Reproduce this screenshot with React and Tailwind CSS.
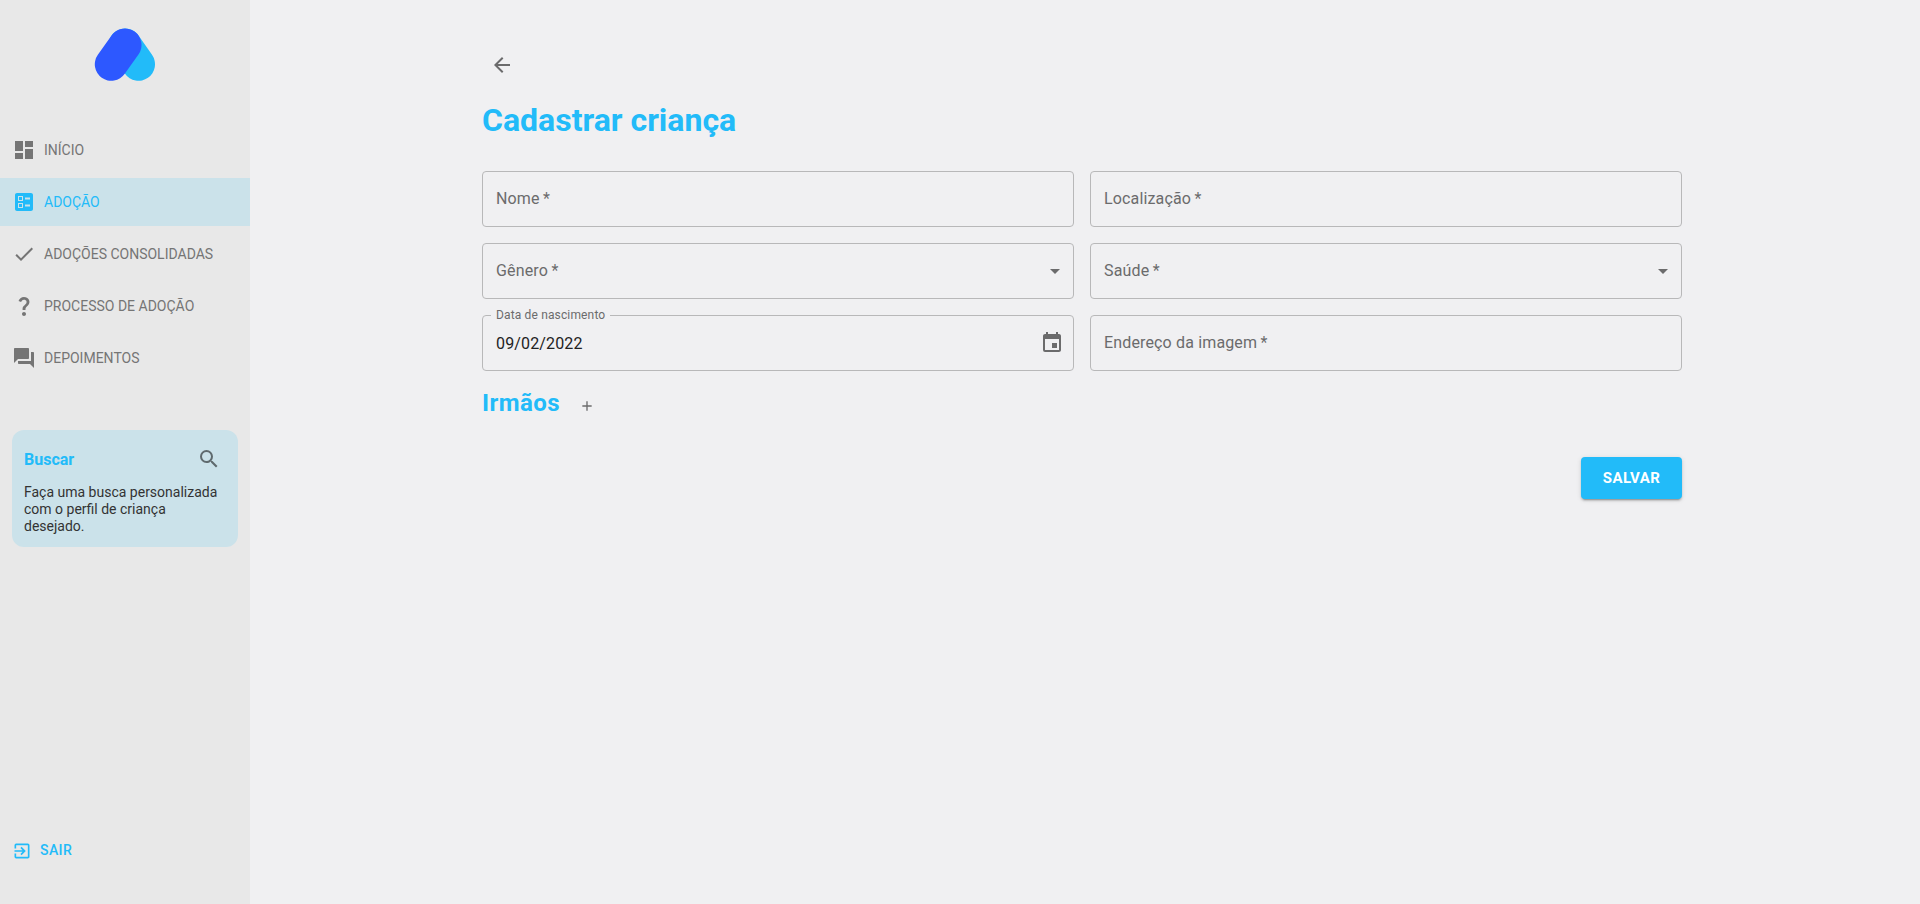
import React from "react";
import {
  MdDashboard,
  MdBallot,
  MdCheck,
  MdQuestionMark,
  MdQuestionAnswer,
  MdSearch,
  MdArrowBack,
  MdArrowDropDown,
  MdEvent,
  MdAdd,
  MdExitToApp,
} from "react-icons/md";

const menu = [
  { label: "INÍCIO", icon: MdDashboard },
  { label: "ADOÇÃO", icon: MdBallot, active: true },
  { label: "ADOÇÕES CONSOLIDADAS", icon: MdCheck },
  { label: "PROCESSO DE ADOÇÃO", icon: MdQuestionMark },
  { label: "DEPOIMENTOS", icon: MdQuestionAnswer },
];

function Logo() {
  return (
    <svg width="62" height="56" viewBox="94 27 62 56" fill="none" strokeWidth="33" strokeLinecap="round">
      <path d="M125 45 138.5 64.3" stroke="#22bbf9" />
      <path d="M125 45 111.3 64.3" stroke="#2d58ff" />
    </svg>
  );
}

function Sidebar() {
  return (
    <aside className="flex w-[250px] shrink-0 flex-col bg-[#e8e8e8]">
      <div className="flex h-[126px] justify-center pt-[27px]">
        <Logo />
      </div>
      <nav className="flex flex-col gap-1">
        {menu.map(({ label, icon: Icon, active }) => (
          <a
            key={label}
            className={`flex h-12 items-center gap-2 pl-3 text-sm ${
              active ? "bg-[#cbe2ea] text-[#22bbf9]" : "text-[#757575]"
            }`}
          >
            <Icon size={24} />
            {label}
          </a>
        ))}
      </nav>
      <section className="mx-3 mt-12 h-[117px] rounded-xl bg-[#cbe2ea] px-3">
        <div className="flex h-[54px] items-center justify-between pt-1 pr-[5px]">
          <h2 className="pt-0.5 text-base font-bold text-[#22bbf9]">Buscar</h2>
          <MdSearch size={24} className="text-[#5f6a6e]" />
        </div>
        <p className="text-sm leading-[17px] text-[#333]">
          Faça uma busca personalizada com o perfil de criança desejado.
        </p>
      </section>
      <button className="mt-auto mb-[41px] ml-3 flex h-6 items-center gap-2 text-sm font-medium tracking-[0.4px] text-[#22bbf9]">
        <MdExitToApp size={20} />
        <span className="pb-0.5">SAIR</span>
      </button>
    </aside>
  );
}

function Field({ label, children }) {
  return (
    <div className="flex h-14 items-center justify-between rounded border border-[#b8b8b9] px-[13px] text-base tracking-[0.15px] text-[#6b6b6c]">
      <span>
        {label}
        {"\u2009*"}
      </span>
      {children}
    </div>
  );
}

export default function App() {
  return (
    <div className="flex h-[904px] bg-[#f0f0f2] font-[Roboto,sans-serif]">
      <Sidebar />
      <main className="flex-1 pl-[232px]">
        <div className="w-[1200px] pt-[45px]">
          <button className="flex size-10 items-center justify-center text-[#6b6b6c]">
            <MdArrowBack size={24} />
          </button>
          <h1 className="mt-[16px] text-[32px] leading-[38px] font-bold text-[#22bbf9]">Cadastrar criança</h1>
          <div className="mt-8 grid grid-cols-2 gap-4">
            <Field label="Nome" />
            <Field label="Localização" />
            <Field label="Gênero">
              <MdArrowDropDown size={24} className="-mr-[7px]" />
            </Field>
            <Field label="Saúde">
              <MdArrowDropDown size={24} className="-mr-[7px]" />
            </Field>
            <div className="relative flex h-14 items-center justify-between rounded border border-[#b8b8b9] px-[13px] text-base tracking-[0.15px] text-[#222]">
              <span className="absolute -top-[9px] left-2 bg-[#f0f0f2] px-[5px] text-xs leading-4 text-[#6b6b6c]">
                Data de nascimento
              </span>
              <span className="pt-0.5">09/02/2022</span>
              <MdEvent size={24} className="-mr-1 text-[#6b6b6c]" />
            </div>
            <Field label="Endereço da imagem" />
          </div>
          <div className="mt-4 flex h-8 items-center">
            <h2 className="text-2xl leading-8 font-bold tracking-[0.45px] text-[#22bbf9]">Irmãos</h2>
            <MdAdd size={16} className="mt-1.5 ml-[19px] text-[#6b6b6c]" />
          </div>
          <div className="mt-[38px] flex justify-end">
            <button className="h-[42px] w-[101px] rounded bg-[#22bbf9] text-[15px] font-bold tracking-[0.4px] text-white shadow-[0_3px_1px_-2px_rgba(0,0,0,0.2),0_2px_2px_0_rgba(0,0,0,0.14),0_1px_5px_0_rgba(0,0,0,0.12)]">
              SALVAR
            </button>
          </div>
        </div>
      </main>
    </div>
  );
}
